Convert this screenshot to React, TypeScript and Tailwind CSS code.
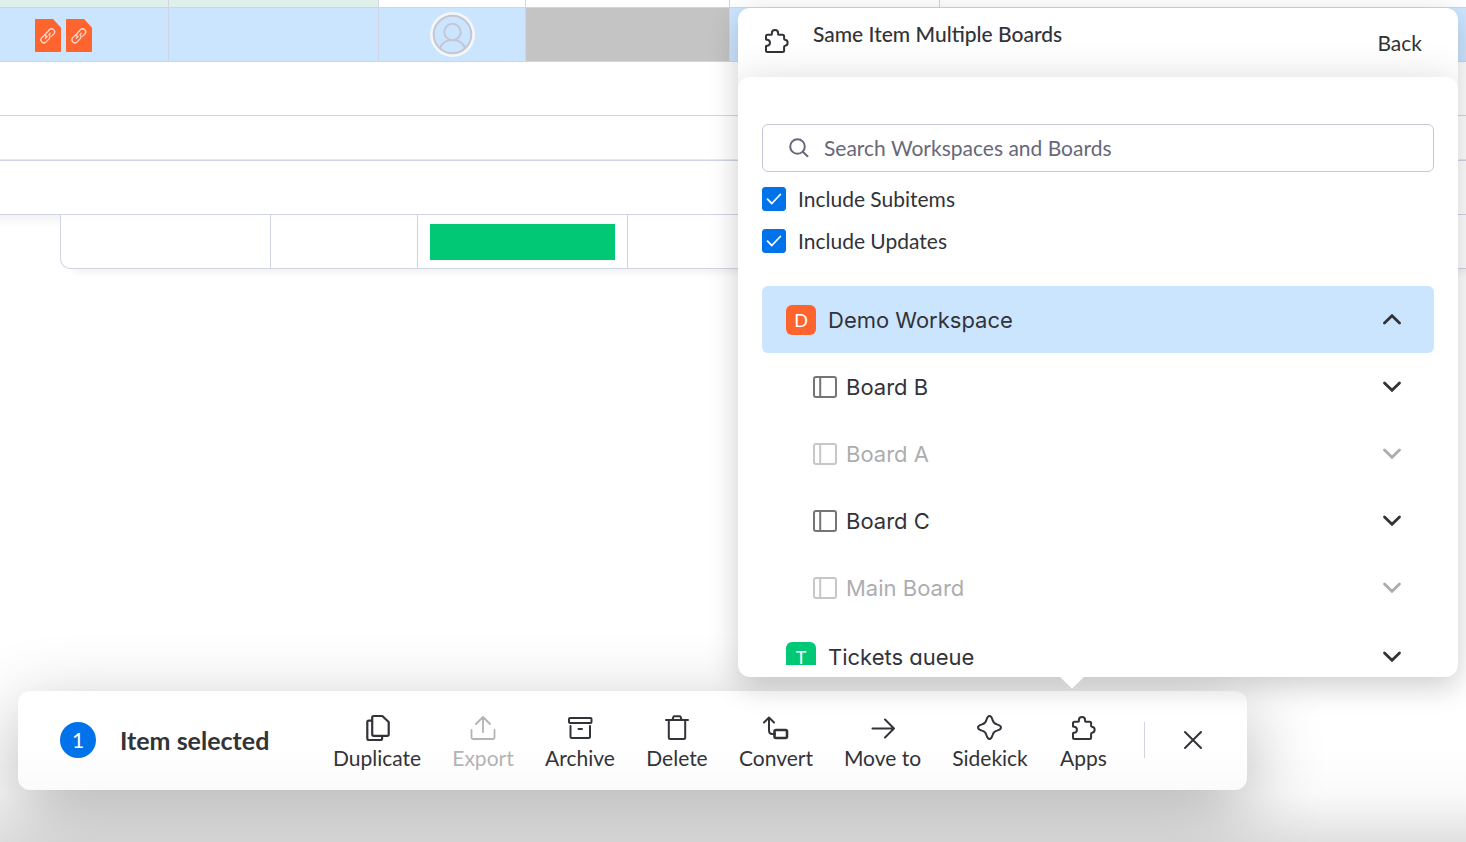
import React from "react";

type IconProps = { className?: string };

function PuzzleIcon({ className }: IconProps) {
  return (
    <svg className={className} viewBox="0 0 24 24" fill="none" stroke="currentColor" strokeWidth="2" strokeLinejoin="round" aria-hidden="true">
      <path d="M1 10.2V7.3Q1 5.8 2.5 5.8H6.2C7 5.8 6.9 5 6.9 4.2A3.1 3.1 0 0 1 13.1 4.2C13.1 5 13 5.8 13.8 5.8H17.6Q19.1 5.8 19.1 7.3V9.8C19.1 10.6 19.6 10.6 20.2 10.8A3 3 0 0 1 20.2 16.7C19.6 16.8 19.1 16.9 19.1 17.7V21.5Q19.1 23 17.6 23H2.5Q1 23 1 21.5V17.5C1 16.6 1.6 16.8 2.4 16.8A3.1 3.1 0 0 0 2.4 10.7C1.6 10.7 1 10.9 1 10.2Z" />
    </svg>
  );
}

function DuplicateIcon() {
  return (
    <svg className="size-7" viewBox="0 0 28 28" fill="none" stroke="currentColor" strokeWidth="2.200" strokeLinejoin="round" strokeLinecap="round" aria-hidden="true">
      <path d="M10.700 2h8.600L25.700 8v12.300q0 1.500-1.500 1.500H10.700q-1.500 0-1.500-1.500V3.500Q9.200 2 10.700 2" />
      <path d="M9 6.600H5.800Q4.300 6.600 4.300 8.100v16.200q0 1.700 1.500 1.700h11.700q1.600 0 1.600-1.500V22" />
    </svg>
  );
}

function ExportIcon() {
  return (
    <svg className="size-7" viewBox="0 0 28 28" fill="none" stroke="currentColor" strokeWidth="1.800" strokeLinejoin="round" strokeLinecap="round" aria-hidden="true">
      <path d="M14 18V3M7 10l7-7 7 7M2.500 16v7.500Q2.500 25 4 25h20Q25.500 25 25.500 23.500V16" />
    </svg>
  );
}

function ArchiveIcon() {
  return (
    <svg className="size-7" viewBox="0 0 28 28" fill="none" stroke="currentColor" strokeWidth="2" strokeLinejoin="round" strokeLinecap="round" aria-hidden="true">
      <rect x="3" y="4" width="22.500" height="5" rx="1" />
      <path d="M4.500 12v10.500Q4.500 24 6 24h16.500Q24 24 24 22.500V12M12.500 15h3.500" />
    </svg>
  );
}

function DeleteIcon() {
  return (
    <svg className="size-7" viewBox="0 0 28 28" fill="none" stroke="currentColor" strokeWidth="2" strokeLinejoin="round" strokeLinecap="round" aria-hidden="true">
      <path d="M3 6h22M5.800 6v17.500Q5.800 25 7.300 25h13.400q1.500 0 1.500-1.500V6M9.500 6l.8-2.900q.3-.8 1.200-.8h5q.9 0 1.200.8l.8 2.900" />
    </svg>
  );
}

function ConvertIcon() {
  return (
    <svg className="size-7" viewBox="0 0 28 28" fill="none" stroke="currentColor" strokeWidth="2" strokeLinejoin="round" strokeLinecap="round" aria-hidden="true">
      <path d="M2 8.500l5-5 5 5M7 4v12.500q0 3.500 3.500 3.500H13" />
      <rect x="12.500" y="16" width="12.500" height="8" rx="1.500" strokeWidth="2.600" />
    </svg>
  );
}

function MoveIcon() {
  return (
    <svg className="size-7" viewBox="0 0 28 28" fill="none" stroke="currentColor" strokeWidth="2" strokeLinejoin="round" strokeLinecap="round" aria-hidden="true">
      <path d="M3.500 14.500h21.500M16 5.500l9 9-9 9" />
    </svg>
  );
}

function SidekickIcon() {
  return (
    <svg className="size-7" viewBox="0 0 28 28" fill="none" stroke="currentColor" strokeWidth="2" strokeLinejoin="round" aria-hidden="true">
      <path d="M13.500 2C15.500 2 16 3.800 16.600 6C17.300 8.900 18.100 9.700 21 10.400C23.200 11 25 11.500 25 13.500S23.200 16 21 16.600C18.100 17.300 17.300 18.100 16.600 21C16 23.200 15.500 25 13.500 25S11 23.200 10.400 21C9.700 18.100 8.900 17.300 6 16.600C3.800 16 2 15.500 2 13.500S3.800 11 6 10.400C8.900 9.700 9.700 8.900 10.400 6C11 3.800 11.500 2 13.500 2Z" />
    </svg>
  );
}

function Chevron({ up }: { up?: boolean }) {
  return (
    <svg className="h-3 w-5 shrink-0" viewBox="0 0 20 12" fill="none" stroke="currentColor" strokeWidth="2.800" strokeLinecap="round" strokeLinejoin="miter" aria-hidden="true">
      <path d={up ? "M2.500 9 10 1.700 17.500 9" : "M2.500 2 10 9.300 17.500 2"} />
    </svg>
  );
}

function BoardIcon() {
  return (
    <svg className="h-[22px] w-6 shrink-0 text-[#757575]" viewBox="0 0 24 22" fill="none" stroke="currentColor" strokeWidth="2" aria-hidden="true">
      <rect x="1" y="1" width="22" height="20" rx="2" />
      <path d="M7.200 1v20" />
    </svg>
  );
}

function LinkFile() {
  return (
    <svg className="h-[33px] w-[26px]" viewBox="0 0 26 33" aria-hidden="true">
      <path d="M1 0H18L26 8.500V32q0 1-1 1H1q-1 0-1-1V1Q0 0 1 0Z" fill="#ff642e" />
      <g transform="translate(12.800 16.800) rotate(-46)" fill="none" stroke="#ffd9cc" strokeWidth="1.300" strokeLinecap="round">
        <path d="M-1-3H-5.500A3 3 0 0 0-5.500 3H-1A3 3 0 0 0 1.700 1" />
        <path d="M1-3H5.500A3 3 0 0 1 5.500 3H2.500M-1.700-.8A3 3 0 0 1 1-3M-3.500 0H-1M1.500 0H3.500" />
      </g>
    </svg>
  );
}

function Avatar() {
  return (
    <svg className="size-[45px]" viewBox="0 0 45 45" fill="none" stroke="#c3c6d4" strokeWidth="2" aria-hidden="true">
      <circle cx="22.500" cy="22.500" r="22.500" fill="#f5f6f8" stroke="none" />
      <circle cx="22.500" cy="22.500" r="18.800" fill="#cce5ff" />
      <circle cx="22.500" cy="20" r="8.200" />
      <path d="M9.800 36C12 31 16.500 28 22.500 28S33 31 35.200 36" />
    </svg>
  );
}

function Option({ label }: { label: string }) {
  return (
    <label className="flex h-6 items-center gap-3">
      <span className="grid size-6 shrink-0">
        <input type="checkbox" defaultChecked className="peer col-start-1 row-start-1 size-6 appearance-none rounded-[3px] border border-[#676879] checked:border-[#0073ea] checked:bg-[#0073ea]" />
        <svg className="pointer-events-none invisible col-start-1 row-start-1 size-6 peer-checked:visible" viewBox="0 0 24 24" fill="none" stroke="white" strokeWidth="1.800" strokeLinecap="round" strokeLinejoin="round" aria-hidden="true">
          <path d="M5.500 12.200 9.800 16.500 18.300 7.500" />
        </svg>
      </span>
      {label}
    </label>
  );
}

function WorkspaceRow({ name, tile, open }: { name: string; tile: string; open?: boolean }) {
  return (
    <button
      type="button"
      aria-expanded={!!open}
      className={`flex h-[67px] w-full shrink-0 items-center gap-3 rounded-md pr-8 pl-6 text-left ${open ? "bg-[#cce5ff]" : ""}`}
    >
      <span className={`grid size-[30px] shrink-0 place-items-center rounded-md text-lg leading-6 text-white ${tile}`}>{name[0]}</span>
      <span className="flex-1 font-['Inter',sans-serif] text-[22px]">{name}</span>
      <Chevron up={open} />
    </button>
  );
}

const boards = [
  { name: "Board B", disabled: false },
  { name: "Board A", disabled: true },
  { name: "Board C", disabled: false },
  { name: "Main Board", disabled: true },
];

const actions = [
  { label: "Duplicate", icon: <DuplicateIcon />, width: "w-[90px]" },
  { label: "Export", icon: <ExportIcon />, width: "w-[62px]", disabled: true },
  { label: "Archive", icon: <ArchiveIcon />, width: "w-[72px]" },
  { label: "Delete", icon: <DeleteIcon />, width: "w-[62px]" },
  { label: "Convert", icon: <ConvertIcon />, width: "w-[76px]" },
  { label: "Move to", icon: <MoveIcon />, width: "w-[77px]" },
  { label: "Sidekick", icon: <SidekickIcon />, width: "w-[78px]" },
  { label: "Apps", icon: <span className="grid size-7 place-items-center"><PuzzleIcon className="size-6" /></span>, width: "w-[49px]" },
];

function BoardGrid() {
  return (
    <div>
      <div className="flex h-2 border-b border-[#d0d4e4]">
        <div className="w-[169px] shrink-0 border-r border-[#d0d4e4] bg-[#dff0ea]" />
        <div className="w-[210px] shrink-0 border-r border-[#d0d4e4] bg-[#dff0ea]" />
        <div className="w-[147px] shrink-0 border-r border-[#d0d4e4]" />
        <div className="w-[204px] shrink-0 border-r border-[#d0d4e4]" />
        <div className="w-[210px] shrink-0 border-r border-[#d0d4e4]" />
      </div>
      <div className="flex h-[54px] border-b border-[#d0d4e4] bg-[#cce5ff]">
        <div className="flex w-[169px] shrink-0 items-center gap-[5px] border-r border-[#d0d4e4] pt-px pl-[35px]">
          <LinkFile />
          <LinkFile />
        </div>
        <div className="w-[210px] shrink-0 border-r border-[#d0d4e4]" />
        <div className="grid w-[147px] shrink-0 place-items-center border-r border-[#d0d4e4]">
          <Avatar />
        </div>
        <div className="w-[204px] shrink-0 border-r border-[#d0d4e4] bg-[#c4c4c4]" />
      </div>
      <div className="h-[54px] border-b border-[#d0d4e4]" />
      <div className="h-[45px] border-b border-[#d0d4e4] shadow-[inset_0_-1px_0_#e6e9ef]" />
      <div className="h-[54px] border-b border-[#d0d4e4]" />
      <div className="flex">
        <div className="h-3 w-[60px] shrink-0 bg-linear-to-b from-[#f3f3f4] to-white" />
        <div className="flex h-[54px] flex-1 rounded-bl-[10px] border-b border-l border-[#d0d4e4] bg-white shadow-[8px_6px_10px_-4px_rgba(0,0,0,0.08)]">
          <div className="w-[210px] shrink-0 border-r border-[#d0d4e4]" />
          <div className="w-[147px] shrink-0 border-r border-[#d0d4e4]" />
          <div className="flex w-[210px] shrink-0 items-center border-r border-[#d0d4e4] px-3">
            <div className="h-9 flex-1 bg-[#00c875]" />
          </div>
        </div>
      </div>
    </div>
  );
}

export default function App() {
  return (
    <main className="relative min-h-screen overflow-hidden bg-white font-['Lato',sans-serif] text-[21px] leading-6 text-[#323338]">
      <BoardGrid />

      <section aria-label="Selection actions" className="absolute bottom-[52px] left-[18px] flex h-[99px] items-center rounded-xl bg-white px-[42px] pb-0.5 shadow-[0_22px_75px_rgba(0,0,0,0.3)]">
        <span className="grid size-9 place-items-center rounded-full bg-[#0073ea] text-white">1</span>
        <span className="ml-6 w-[212px] text-[25px] font-bold">Item selected</span>
        <div className="mt-1 flex gap-[30px]">
          {actions.map((a) => (
            <button
              key={a.label}
              type="button"
              disabled={a.disabled}
              className={`flex flex-col items-center gap-1 whitespace-nowrap disabled:text-[#b4b4b6] ${a.width}`}
            >
              {a.icon}
              <span>{a.label}</span>
            </button>
          ))}
        </div>
        <div className="ml-9 h-9 w-px bg-[#d0d4e4]" />
        <button type="button" aria-label="Clear selection" className="mr-px ml-[37px]">
          <svg className="size-[22px]" viewBox="0 0 22 22" stroke="currentColor" strokeWidth="2" strokeLinecap="round" aria-hidden="true">
            <path d="M3 3l16 16M19 3L3 19" />
          </svg>
        </button>
      </section>

      <section aria-label="Same Item Multiple Boards" className="absolute top-2 right-2 bottom-[165px] flex w-[720px] flex-col rounded-xl bg-white shadow-[0_9px_30px_rgba(0,0,0,0.2)]">
        <div className="flex min-h-0 flex-1 flex-col overflow-hidden rounded-xl">
          <header className="flex h-[69px] shrink-0 items-start pr-9 pl-[27px]">
            <PuzzleIcon className="mt-[21px] size-6" />
            <h1 className="mt-[14px] ml-6 flex-1 font-medium">Same Item Multiple Boards</h1>
            <button type="button" className="mt-[23px]">Back</button>
          </header>
          <div className="flex min-h-0 flex-1 flex-col rounded-xl bg-white px-6 pt-[47px] pb-3 shadow-[0_9px_45px_rgba(0,0,0,0.2)]">
            <label className="flex h-12 shrink-0 items-center gap-3 rounded-md border border-[#c3c6d4] pl-[25px] text-[#676879]">
              <svg className="size-6 shrink-0" viewBox="0 0 24 24" fill="none" stroke="currentColor" strokeWidth="2" strokeLinecap="round" aria-hidden="true">
                <circle cx="9.500" cy="10.500" r="7.300" />
                <path d="M14.800 15.800l4.700 4.500" />
              </svg>
              <input type="search" aria-label="Search Workspaces and Boards" placeholder="Search Workspaces and Boards" className="min-w-0 flex-1 bg-transparent outline-none placeholder:text-[#676879]" />
            </label>
            <div className="mt-[15px] flex shrink-0 flex-col gap-[18px]">
              <Option label="Include Subitems" />
              <Option label="Include Updates" />
            </div>
            <div className="mt-[33px] flex min-h-0 flex-1 flex-col overflow-y-auto [scrollbar-width:none]">
              <WorkspaceRow name="Demo Workspace" tile="bg-[#ff642e]" open />
              <ul className="mb-0.5 shrink-0">
                {boards.map((b) => (
                  <li key={b.name}>
                    <button type="button" disabled={b.disabled} className="flex h-[67px] w-full items-center gap-[9px] pr-8 pl-[51px] text-left disabled:opacity-40">
                      <BoardIcon />
                      <span className="flex-1 font-['Inter',sans-serif] text-[22px]">{b.name}</span>
                      <Chevron />
                    </button>
                  </li>
                ))}
              </ul>
              <WorkspaceRow name="Tickets queue" tile="bg-[#00c875]" />
            </div>
          </div>
        </div>
        <svg className="absolute top-full right-[374px] h-3 w-6" viewBox="0 0 24 12" aria-hidden="true">
          <path d="M0 0H24L12 11.500Z" fill="white" />
        </svg>
      </section>

      <div className="pointer-events-none absolute inset-x-0 bottom-0 h-24 bg-linear-to-b from-transparent via-black/2 to-black/12" />
    </main>
  );
}
